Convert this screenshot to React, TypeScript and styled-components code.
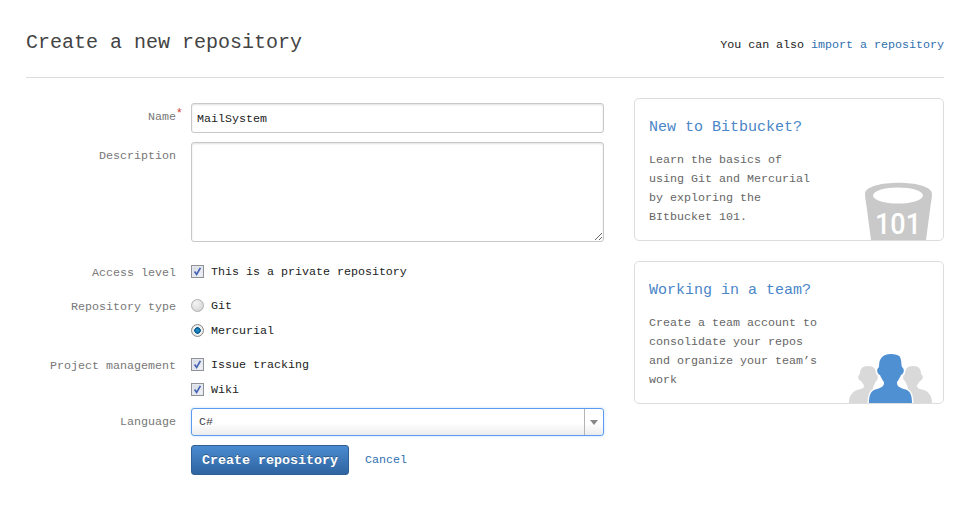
import React from "react";
import styled, {createGlobalStyle} from "styled-components";

const GlobalStyle = createGlobalStyle`
  html, body {
    margin: 0;
    padding: 0;
    background: #fff;
  }
  body {
    font-family: "Liberation Mono", "DejaVu Sans Mono", monospace;
    font-size: 11.67px;
    color: #333;
  }
`;

const Page = styled.div`
  width: 962px;
  height: 505px;
  box-sizing: border-box;
  padding: 0 18px 0 26px;
  overflow: hidden;
`;

const Header = styled.header`
  height: 78px;
  box-sizing: border-box;
  padding-top: 8px;
  display: flex;
  align-items: center;
  justify-content: space-between;
  border-bottom: 1px solid #ddd;
`;

const Title = styled.h1`
  margin: 0;
  font-size: 20px;
  font-weight: normal;
  color: #444;
`;

const HeaderNote = styled.div`
  margin-top: 4px;
  color: #222;
`;

const Link = styled.a`
  color: #2f6fb0;
  text-decoration: none;
`;

const Body = styled.div`
  display: flex;
  gap: 30px;
  padding-top: 20px;
`;

const Form = styled.form`
  width: 578px;
  margin-top: 5px;
`;

const Row = styled.div<{$after?: number}>`
  display: grid;
  grid-template-columns: 150px 413px;
  column-gap: 15px;
  margin-bottom: ${p => p.$after ?? 9}px;
`;

const Label = styled.label`
  position: relative;
  text-align: right;
  line-height: 28px;
  color: #777;
`;

const Required = styled.span`
  position: absolute;
  right: -7px;
  top: -3px;
  color: #d04437;
  font-size: 12px;
`;

const TextInput = styled.input`
  display: block;
  width: 100%;
  height: 30px;
  box-sizing: border-box;
  padding: 1px 5px 0;
  border: 1px solid #c8c8c8;
  border-radius: 3px;
  box-shadow: inset 0 1px 2px rgba(0, 0, 0, 0.12);
  font: inherit;
  color: #222;
  outline: none;
`;

const TextArea = styled.textarea`
  display: block;
  width: 100%;
  height: 100px;
  box-sizing: border-box;
  padding: 5px;
  border: 1px solid #c8c8c8;
  border-radius: 3px;
  box-shadow: inset 0 1px 2px rgba(0, 0, 0, 0.12);
  font: inherit;
  outline: none;
`;

const Option = styled.div`
  display: flex;
  align-items: center;
  height: 25px;
  gap: 7px;
  color: #222;
`;

const CheckBox = styled.span`
  width: 13px;
  height: 13px;
  box-sizing: border-box;
  border: 1px solid #8f9296;
  background: linear-gradient(135deg, #d6d9e2, #f3f4f8);
  box-shadow: inset 0 0 0 1px #e6e8ef;
  display: flex;
  flex: none;
`;

const Radio = styled.span<{$on?: boolean}>`
  width: 13px;
  height: 13px;
  box-sizing: border-box;
  border-radius: 50%;
  border: 1px solid ${p => (p.$on ? "#8a8a8a" : "#b0b0b0")};
  background: ${p => (p.$on
    ? "radial-gradient(circle at 50% 50%, #2aa0d8 0, #0b5f96 2.6px, #0b5f96 3px, #f4f4f4 3.6px, #d4d4d4 100%)"
    : "radial-gradient(circle at 35% 30%, #f4f4f4, #cfcfcf)")};
  flex: none;
`;

const Select = styled.div`
  height: 28px;
  box-sizing: border-box;
  display: flex;
  border: 1px solid #5b9bf0;
  border-radius: 3px;
  background: linear-gradient(#fff 55%, #ececec);
  box-shadow: 0 0 3px rgba(91, 155, 240, 0.35);
`;

const SelectValue = styled.div`
  flex: 1;
  padding-left: 7px;
  line-height: 26px;
  color: #444;
`;

const SelectArrow = styled.div`
  width: 18px;
  border-left: 1px solid #b5b5b5;
  display: flex;
  align-items: center;
  justify-content: center;
  &::after {
    content: "";
    border: 4px solid transparent;
    border-top: 5px solid #888;
    border-bottom: 0;
  }
`;

const Actions = styled.div`
  display: flex;
  align-items: center;
  gap: 16px;
`;

const PrimaryButton = styled.button`
  width: 158px;
  height: 30px;
  padding: 0;
  border: 1px solid #2f5f93;
  border-radius: 3px;
  background: linear-gradient(#4a8bd0, #2f64a0);
  color: #fff;
  font-family: inherit;
  font-size: 13.33px;
  font-weight: bold;
  text-shadow: 0 -1px 0 rgba(0, 0, 0, 0.3);
`;

const Sidebar = styled.aside`
  width: 310px;
  display: flex;
  flex-direction: column;
  gap: 20px;
`;

const Card = styled.section`
  position: relative;
  height: 143px;
  box-sizing: border-box;
  padding: 19px 14px 0;
  border: 1px solid #ddd;
  border-radius: 5px;
`;

const CardTitle = styled.h2`
  margin: 0 0 13px;
  font-size: 15px;
  font-weight: normal;
  line-height: 20px;
  color: #4a86c8;
`;

const CardText = styled.p`
  margin: 0;
  max-width: 170px;
  line-height: 19px;
  color: #666;
`;

const Illustration = styled.svg<{$right: number}>`
  position: absolute;
  right: ${p => p.$right}px;
  bottom: 0;
  display: block;
`;

const Tick = () => (
  <svg width="11" height="11" viewBox="0 0 11 11">
    <path d="M2.6 5.6 L4.6 8.4 L8.4 1.8" fill="none" stroke="#4463b4" strokeWidth="1.7" />
  </svg>
);

const Bucket = () => (
  <Illustration $right={11} width="67" height="58" viewBox="0 0 67 58">
    <path d="M0 12 C0 -3 67 -3 67 12 C67 16 66 20 65.5 24 L61 58 L6 58 L1.5 24 C1 20 0 16 0 12Z" fill="#c9c9c9" />
    <ellipse cx="33" cy="13.5" rx="25" ry="8" fill="#fff" />
    <text x="10" y="52" fontFamily="Roboto, 'Liberation Sans', sans-serif" fontSize="30" fontWeight="500" fill="#fff"
          textLength="46" lengthAdjust="spacingAndGlyphs">101</text>
  </Illustration>
);

const GRAY_PERSON = "M19 12 C25 12 27 15 27 20 C30 22 29 26 27 27 C25 31 24 33 24 35 L30 38 L30 49 L0 49 C0 42 3 38 8 36 C13 35 15 34 15 32 C15 30 13 29 12 27 C9 26 8 22 11 20 C11 15 13 12 19 12Z";

const Team = () => (
  <Illustration $right={10} width="84" height="49" viewBox="0 0 84 49">
    <path d={GRAY_PERSON} fill="#d9d9d9" />
    <path d={GRAY_PERSON} fill="#d9d9d9" transform="translate(83 0) scale(-1 1)" />
    <path
      d="M41 0 C46 0 50 1 51 3 C53 8 52 10 53 13 C56 15 55 20 52 21 C50 26 48 27 48 29 C48 33 52 34 58 36 C62 38 63 43 63 49 L20 49 C20 43 21 38 25 36 C31 34 35 33 35 29 C35 27 33 26 31 21 C28 20 27 15 30 13 C30 7 31 1 41 0Z"
      fill="#4f90d3" stroke="#fff" strokeWidth="3" paintOrder="stroke"
    />
  </Illustration>
);

const App: React.FC = () => (
  <Page>
    <GlobalStyle />
    <Header>
      <Title>Create a new repository</Title>
      <HeaderNote>You can also <Link href="#">import a repository</Link></HeaderNote>
    </Header>
    <Body>
      <Form>
        <Row>
          <Label>Name<Required>*</Required></Label>
          <TextInput readOnly value="MailSystem" />
        </Row>
        <Row $after={17}>
          <Label>Description</Label>
          <TextArea readOnly />
        </Row>
        <Row $after={6}>
          <Label>Access level</Label>
          <div>
            <Option><CheckBox><Tick /></CheckBox>This is a private repository</Option>
          </div>
        </Row>
        <Row>
          <Label>Repository type</Label>
          <div>
            <Option><Radio />Git</Option>
            <Option><Radio $on />Mercurial</Option>
          </div>
        </Row>
        <Row $after={6}>
          <Label>Project management</Label>
          <div>
            <Option><CheckBox><Tick /></CheckBox>Issue tracking</Option>
            <Option><CheckBox><Tick /></CheckBox>Wiki</Option>
          </div>
        </Row>
        <Row>
          <Label>Language</Label>
          <Select>
            <SelectValue>C#</SelectValue>
            <SelectArrow />
          </Select>
        </Row>
        <Row>
          <span />
          <Actions>
            <PrimaryButton type="button">Create repository</PrimaryButton>
            <Link href="#">Cancel</Link>
          </Actions>
        </Row>
      </Form>
      <Sidebar>
        <Card>
          <CardTitle>New to Bitbucket?</CardTitle>
          <CardText>Learn the basics of using Git and Mercurial by exploring the BItbucket 101.</CardText>
          <Bucket />
        </Card>
        <Card>
          <CardTitle>Working in a team?</CardTitle>
          <CardText>Create a team account to consolidate your repos and organize your team’s work</CardText>
          <Team />
        </Card>
      </Sidebar>
    </Body>
  </Page>
);

export default App;
